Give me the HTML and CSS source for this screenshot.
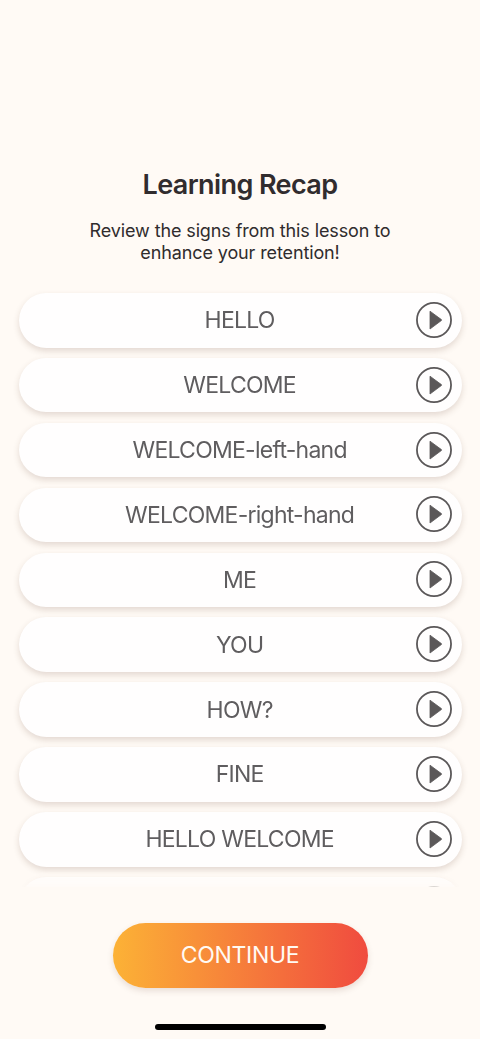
FILE: index.html
```html
<!DOCTYPE html>
<html lang="en">
<head>
<meta charset="utf-8">
<title>Learning Recap</title>
<link rel="stylesheet" href="styles.css">
</head>
<body>
<svg width="0" height="0" class="sprite"><symbol id="play" viewBox="0 0 36 36"><circle cx="18" cy="18" r="17.05" fill="none" stroke="currentColor" stroke-width="1.8"/><path d="M14 9.2 25.4 17.6Q26 18 25.4 18.5L14 27Z" fill="currentColor" stroke="currentColor" stroke-width=".8" stroke-linejoin="round"/></symbol></svg>
<main class="screen">
  <h1 class="title">Learning Recap</h1>
  <p class="subtitle">Review the signs from this lesson to<br>enhance your retention!</p>
  <div class="list">
    <div class="card"><span class="label">HELLO</span><svg class="play"><use href="#play"/></svg></div>
    <div class="card"><span class="label">WELCOME</span><svg class="play"><use href="#play"/></svg></div>
    <div class="card"><span class="label">WELCOME-left-hand</span><svg class="play"><use href="#play"/></svg></div>
    <div class="card"><span class="label">WELCOME-right-hand</span><svg class="play"><use href="#play"/></svg></div>
    <div class="card"><span class="label">ME</span><svg class="play"><use href="#play"/></svg></div>
    <div class="card"><span class="label">YOU</span><svg class="play"><use href="#play"/></svg></div>
    <div class="card"><span class="label">HOW?</span><svg class="play"><use href="#play"/></svg></div>
    <div class="card"><span class="label">FINE</span><svg class="play"><use href="#play"/></svg></div>
    <div class="card"><span class="label">HELLO WELCOME</span><svg class="play"><use href="#play"/></svg></div>
    <div class="card"><svg class="play"><use href="#play"/></svg></div>
  </div>
  <button class="continue">CONTINUE</button>
  <div class="home-bar"></div>
</main>
</body>
</html>
```
FILE: styles.css
```css
* { box-sizing: border-box; }
body { margin: 0; background: #fffaf5; font-family: Inter, sans-serif; }
.sprite { position: absolute; }
.screen { height: 1039px; padding-top: 168px; display: flex; flex-direction: column; align-items: center; overflow: hidden; }
.title { margin: 0; font-size: 27px; line-height: 34px; font-weight: 600; letter-spacing: -0.6px; color: #312c2e; }
.subtitle { margin: 18px 0 0; font-size: 18px; line-height: 22px; letter-spacing: -0.12px; text-align: center; color: #302c2d; }
.list { width: 480px; height: 604px; margin-top: 19px; padding: 10px 18.5px 0; display: flex; flex-direction: column; gap: 10.4px; overflow: hidden;
  -webkit-mask-image: linear-gradient(#000 588px, transparent 608px); mask-image: linear-gradient(#000 588px, transparent 608px); }
.card { flex: 0 0 54.5px; display: grid; grid-template-columns: 36px 1fr 36px; align-items: center; padding: 0 9.5px; border-radius: 28px; background: #fffefe; box-shadow: 0 3px 6px rgba(90, 55, 35, .17); }
.label { grid-column: 2; text-align: center; font-size: 23px; line-height: 28px; letter-spacing: -0.75px; text-indent: -0.75px; color: #5f5d5f; font-weight: 400; white-space: nowrap; }
.play { grid-column: 3; width: 36px; height: 36px; margin-top: -1px; color: #5b5859; }
.continue { flex: none; width: 255px; height: 65px; margin-top: 35.5px; padding: 0; border: 0; border-radius: 33px; background: linear-gradient(90deg, #fcb236, #f04b3f); box-shadow: 0 3px 6px rgba(100, 60, 50, .15); color: #fffaf4; font: 400 23px/28px Inter, sans-serif; letter-spacing: -0.3px; }
.home-bar { flex: none; width: 171px; height: 6px; margin-top: 36px; border-radius: 3px; background: #000; }
```
